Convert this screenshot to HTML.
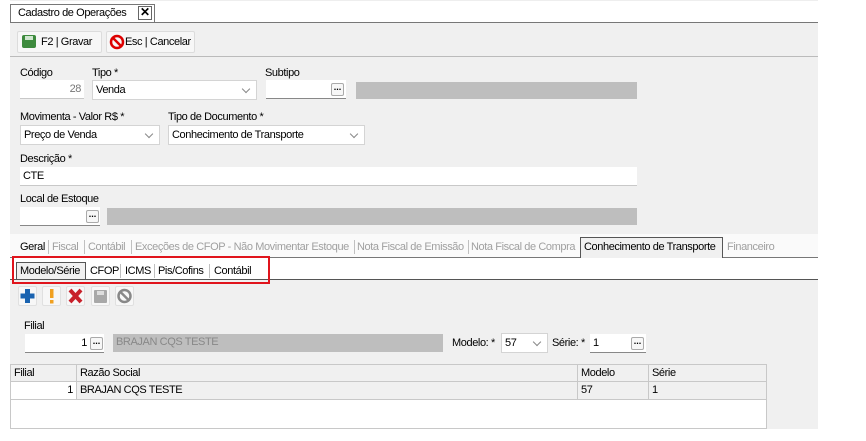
<!DOCTYPE html>
<html><head><meta charset="utf-8"><style>
*{box-sizing:border-box;margin:0;padding:0}
body{width:866px;height:441px;background:#fff;position:relative;overflow:hidden;font-family:"Liberation Sans",Tahoma,sans-serif;font-size:11px;letter-spacing:-0.4px;color:#000}
.a{position:absolute}
.lbl{position:absolute;font-size:11px;white-space:nowrap}
.in{position:absolute;background:#fff;border-bottom:1px solid #c8c8c8;height:19px;line-height:18px;padding:0 3px;white-space:nowrap}
.sel{position:absolute;background:#fff;border:1px solid #d4d4d4;height:20px;line-height:18px;padding:0 3px;white-space:nowrap}
.sel:after{content:"";position:absolute;right:7px;top:5px;width:5px;height:5px;border-right:1px solid #888;border-bottom:1px solid #888;transform:rotate(45deg)}
.dots{position:absolute;width:13px;height:13px;border:1px solid #aaa;border-radius:2px;background:#f7f7f7;font-size:9px;line-height:6px;text-align:center;font-weight:bold;letter-spacing:0}
.bar{position:absolute;background:#bebebe}
.tb{position:absolute;background:#f7f7f7;border:1px solid #dcdcdc;border-radius:2px;height:22px;line-height:20px;white-space:nowrap}
.t1{position:absolute;top:241px;color:#a0a0a0;white-space:nowrap}
.sep{position:absolute;width:1px;background:#c0c0c0}
.ib{position:absolute;top:286px;width:19px;height:20px;background:#f7f7f7;border:1px solid #e0e0e0;border-radius:2px}
.cell{position:absolute;height:18px;line-height:17px;padding:0 3px;border-right:1px solid #c8c8c8;border-bottom:1px solid #c8c8c8;white-space:nowrap}
</style></head><body>
<div class="a" style="left:10px;top:0;width:808px;height:1px;background:#eee"></div>
<div class="a" style="left:10px;top:4px;width:145px;height:19px;border:1px solid #777;border-bottom:none;background:#fff"></div>
<div class="lbl" style="left:18px;top:7px">Cadastro de Operações</div>
<div class="a" style="left:138px;top:6px;width:14px;height:14px;border:1px solid #666;font-size:12px;line-height:11px;text-align:center;font-weight:bold;letter-spacing:0">✕</div>
<div class="a" style="left:10px;top:22px;width:808px;height:1px;background:#777"></div>
<div class="a" style="left:10px;top:23px;width:808px;height:211px;background:#f0f0f0"></div>
<div class="a" style="left:10px;top:56px;width:808px;height:1px;background:#bbb"></div>
<div class="tb" style="left:17px;top:31px;width:85px"><span class="a" style="left:4px;top:3px;width:14px;height:13px;background:#3d8a3d;border-radius:2px"></span><span class="a" style="left:7px;top:4px;width:8px;height:4px;background:#cfe6cf"></span><span class="a" style="left:23px;top:0">F2 | Gravar</span></div>
<div class="tb" style="left:106px;top:31px;width:89px"><svg class="a" style="left:2px;top:2px" width="16" height="16"><circle cx="8" cy="8" r="6" fill="none" stroke="#d00" stroke-width="2.5"/><line x1="4" y1="4" x2="12" y2="12" stroke="#d00" stroke-width="2.5"/></svg><span class="a" style="left:18px;top:0">Esc | Cancelar</span></div>

<div class="lbl" style="left:20px;top:67px">Código</div>
<div class="in" style="left:20px;top:80px;width:64px;text-align:right;color:#777">28</div>
<div class="lbl" style="left:92px;top:67px">Tipo *</div>
<div class="sel" style="left:92px;top:80px;width:165px">Venda</div>
<div class="lbl" style="left:265px;top:67px">Subtipo</div>
<div class="in" style="left:266px;top:80px;width:80px;border-bottom-color:#888"></div>
<div class="dots" style="left:331px;top:83px">...</div>
<div class="bar" style="left:356px;top:82px;width:281px;height:17px"></div>

<div class="lbl" style="left:20px;top:111px">Movimenta - Valor R$ *</div>
<div class="sel" style="left:20px;top:125px;width:140px">Preço de Venda</div>
<div class="lbl" style="left:168px;top:111px">Tipo de Documento *</div>
<div class="sel" style="left:168px;top:125px;width:197px">Conhecimento de Transporte</div>

<div class="lbl" style="left:20px;top:153px">Descrição *</div>
<div class="in" style="left:20px;top:167px;width:617px">CTE</div>
<div class="lbl" style="left:20px;top:193px">Local de Estoque</div>
<div class="in" style="left:20px;top:207px;width:80px;border-bottom-color:#888"></div>
<div class="dots" style="left:86px;top:210px">...</div>
<div class="bar" style="left:107px;top:208px;width:530px;height:17px"></div>

<div class="a" style="left:10px;top:234px;width:808px;height:24px;background:#fafafa"></div>
<div class="lbl" style="left:20px;top:241px">Geral</div>
<div class="sep" style="left:48px;top:240px;height:14px"></div>
<div class="t1" style="left:52px">Fiscal</div>
<div class="sep" style="left:84px;top:240px;height:14px"></div>
<div class="t1" style="left:88px">Contábil</div>
<div class="sep" style="left:131px;top:240px;height:14px"></div>
<div class="t1" style="left:135px">Exceções de CFOP - Não Movimentar Estoque</div>
<div class="sep" style="left:354px;top:240px;height:14px"></div>
<div class="t1" style="left:357px">Nota Fiscal de Emissão</div>
<div class="sep" style="left:468px;top:240px;height:14px"></div>
<div class="t1" style="left:471px">Nota Fiscal de Compra</div>
<div class="a" style="left:580px;top:237px;width:143px;height:21px;border:1px solid #555;border-bottom:none;background:#f0f0f0"></div>
<div class="lbl" style="left:584px;top:241px">Conhecimento de Transporte</div>
<div class="t1" style="left:727px">Financeiro</div>
<div class="a" style="left:10px;top:257px;width:570px;height:1px;background:#777"></div>
<div class="a" style="left:723px;top:257px;width:95px;height:1px;background:#777"></div>
<div class="a" style="left:16px;top:262px;width:70px;height:18px;border:1px solid #555;border-bottom:none;background:#f0f0f0"></div>
<div class="lbl" style="left:20px;top:265px">Modelo/Série</div>
<div class="lbl" style="left:90px;top:265px">CFOP</div>
<div class="sep" style="left:120px;top:264px;height:14px"></div>
<div class="lbl" style="left:125px;top:265px">ICMS</div>
<div class="sep" style="left:154px;top:264px;height:14px"></div>
<div class="lbl" style="left:158px;top:265px">Pis/Cofins</div>
<div class="sep" style="left:209px;top:264px;height:14px"></div>
<div class="lbl" style="left:214px;top:265px">Contábil</div>
<div class="a" style="left:10px;top:279px;width:808px;height:1px;background:#555"></div>
<div class="a" style="left:10px;top:280px;width:808px;height:149px;background:#f0f0f0"></div>
<div class="a" style="left:12px;top:256px;width:258px;height:28px;border:2px solid #e0141c"></div>
<div class="ib" style="left:18px"><svg width="17" height="18"><rect x="6" y="2" width="5" height="14" fill="#1a63b0"/><rect x="1.5" y="6.5" width="14" height="5" fill="#1a63b0"/></svg></div>
<div class="ib" style="left:42px"><svg width="17" height="18"><rect x="7" y="2" width="3.5" height="9" fill="#f0a020"/><rect x="7" y="13" width="3.5" height="3.5" fill="#f0a020"/></svg></div>
<div class="ib" style="left:66px"><svg width="17" height="18"><path d="M3 3 L14 15 M14 3 L3 15" stroke="#c8202a" stroke-width="4"/></svg></div>
<div class="ib" style="left:91px"><svg width="17" height="18"><rect x="2" y="3" width="13" height="13" rx="1" fill="#a8a8a8"/><rect x="5" y="4" width="7" height="4" fill="#ddd"/></svg></div>
<div class="ib" style="left:115px"><svg width="17" height="18"><circle cx="8.5" cy="9" r="6" fill="none" stroke="#888" stroke-width="2.5"/><line x1="4.5" y1="5" x2="12.5" y2="13" stroke="#888" stroke-width="2.5"/></svg></div>

<div class="lbl" style="left:24px;top:320px">Filial</div>
<div class="in" style="left:25px;top:334px;width:79px;text-align:right;padding-right:17px;border-bottom-color:#888">1</div>
<div class="dots" style="left:90px;top:337px">...</div>
<div class="bar" style="left:113px;top:334px;width:330px;height:18px;color:#888;line-height:17px;padding-left:3px">BRAJAN CQS TESTE</div>
<div class="lbl" style="left:452px;top:337px">Modelo: *</div>
<div class="sel" style="left:501px;top:333px;width:47px">57</div>
<div class="lbl" style="left:552px;top:337px">Série: *</div>
<div class="in" style="left:590px;top:334px;width:56px;border-bottom-color:#888">1</div>
<div class="dots" style="left:631px;top:337px">...</div>

<div class="a" style="left:10px;top:364px;width:757px;height:65px;background:#fff;border:1px solid #c8c8c8"></div>
<div class="a" style="left:10px;top:364px;width:757px;height:36px;background:#f0f0f0"></div>
<div class="cell" style="left:10px;top:364px;width:67px;border-top:1px solid #c8c8c8;border-left:1px solid #c8c8c8">Filial</div>
<div class="cell" style="left:77px;top:364px;width:501px;border-top:1px solid #c8c8c8">Razão Social</div>
<div class="cell" style="left:578px;top:364px;width:71px;border-top:1px solid #c8c8c8">Modelo</div>
<div class="cell" style="left:649px;top:364px;width:118px;border-top:1px solid #c8c8c8">Série</div>
<div class="cell" style="left:10px;top:382px;width:67px;text-align:right;background:#fff;border-left:1px solid #c8c8c8">1</div>
<div class="cell" style="left:77px;top:382px;width:501px">BRAJAN CQS TESTE</div>
<div class="cell" style="left:578px;top:382px;width:71px">57</div>
<div class="cell" style="left:649px;top:382px;width:118px">1</div>
</body></html>
